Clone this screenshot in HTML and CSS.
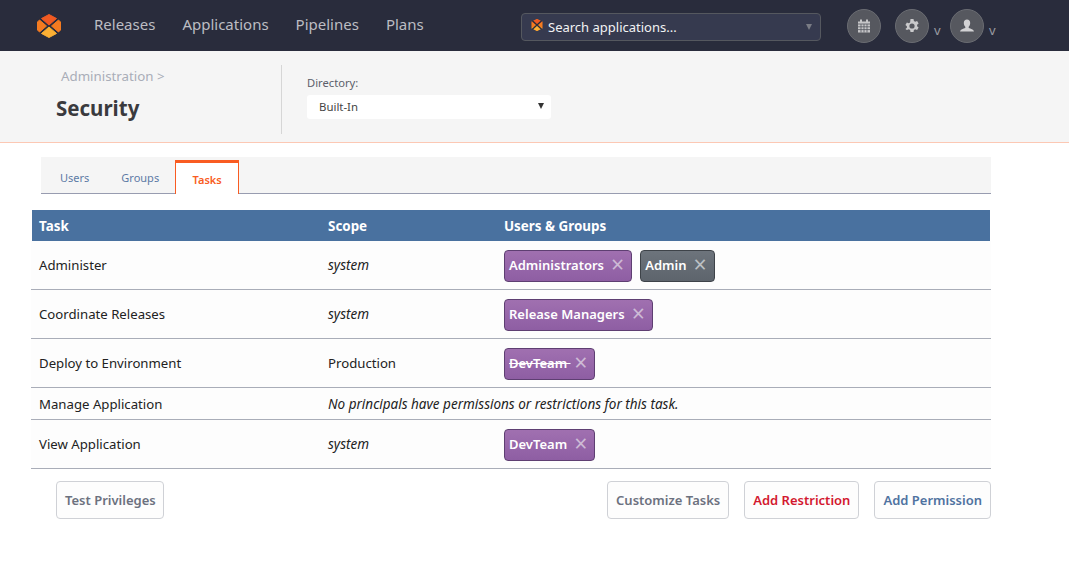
FILE: index.html
```html
<!DOCTYPE html>
<html lang="en">
<head>
<meta charset="utf-8">
<title>Security</title>
<link rel="stylesheet" href="styles.css">
</head>
<body>
<header class="nav">
  <svg class="logo" viewBox="0 0 26 26" width="26" height="26" aria-hidden="true">
    <path d="M13 1.500 L20.500 5.500 L13 12 L5.500 5.500Z" fill="#f05a22" stroke="#f05a22" stroke-linejoin="round"/>
    <path d="M22.500 7 L24.500 9 V17 L22.500 19 L15.500 13Z" fill="#f47b20" stroke="#f47b20" stroke-linejoin="round"/>
    <path d="M3.500 7 L1.500 9 V17 L3.500 19 L10.500 13Z" fill="#f47b20" stroke="#f47b20" stroke-linejoin="round"/>
    <path d="M13 14 L20.500 20.500 L13 24.500 L5.500 20.500Z" fill="#fbb034" stroke="#fbb034" stroke-linejoin="round"/>
  </svg>
  <nav class="nav-links">
    <a>Releases</a><a>Applications</a><a>Pipelines</a><a>Plans</a>
  </nav>
  <div class="search">
    <svg class="search-icon" viewBox="0 0 26 26" width="12" height="12" aria-hidden="true">
      <path d="M13 0 L25 6 V20 L13 26 L1 20 V6Z" fill="#f47b20"/>
      <path d="M13 0 L25 6 L13 13 L1 6Z" fill="#f05a22"/>
      <path d="M13 13 L25 20 L13 26 L1 20Z" fill="#fbb034"/>
      <path d="M3 4 L23 22 M23 4 L3 22" stroke="#292c3c" stroke-width="3"/>
    </svg>
    <span class="search-text">Search applications...</span>
    <span class="search-caret"></span>
  </div>
  <div class="round cal">
    <svg viewBox="0 0 14 14" width="14" height="14" aria-hidden="true">
      <path d="M1 2.500 H13 V13.500 H1Z" fill="#c6c6c8"/>
      <rect x="3" y=".5" width="2" height="3" fill="#c6c6c8"/>
      <rect x="9" y=".5" width="2" height="3" fill="#c6c6c8"/>
      <path d="M1 5 H13 M1 7.800 H13 M1 10.600 H13 M4 5 V13.500 M7 5 V13.500 M10 5 V13.500" stroke="#56585f" stroke-width=".8"/>
    </svg>
  </div>
  <div class="round gear">
    <svg viewBox="0 0 16 16" width="16" height="16" aria-hidden="true">
      <path fill="#c9c9cb" fill-rule="evenodd" d="M6.500 1h3l.4 2 1.300.7 1.900-.8 1.500 2.600-1.500 1.300v1.400l1.500 1.300-1.500 2.600-1.900-.8-1.300.7-.4 2h-3l-.4-2-1.300-.7-1.900.8L1.400 11l1.500-1.300V8.300L1.400 7 2.900 4.400l1.900.8L6.100 4.500ZM8 5.400a2.600 2.600 0 1 0 0 5.200 2.600 2.600 0 0 0 0-5.200Z"/>
    </svg>
  </div>
  <span class="chev">v</span>
  <div class="round user">
    <svg viewBox="0 0 16 16" width="16" height="16" aria-hidden="true">
      <path fill="#d2d2d4" d="M8 1.500c2 0 3.200 1.500 3.200 3.500 0 1.500-.7 3-1.500 3.700v1.300c2 .7 4.800 1.300 5.300 3.500H1c.5-2.200 3.300-2.800 5.300-3.500V8.700C5.500 8 4.800 6.500 4.800 5c0-2 1.200-3.500 3.200-3.500Z"/>
    </svg>
  </div>
  <span class="chev">v</span>
</header>

<section class="subhead">
  <div class="title-block">
    <div class="crumb">Administration &gt;</div>
    <h1>Security</h1>
  </div>
  <div class="directory">
    <label class="dir-label">Directory:</label>
    <div class="select"><span>Built-In</span><i class="select-caret"></i></div>
  </div>
</section>

<main class="content">
  <div class="tabs">
    <a class="tab">Users</a>
    <a class="tab">Groups</a>
    <a class="tab active">Tasks</a>
  </div>

  <table class="grid">
    <colgroup><col class="c1"><col class="c2"><col></colgroup>
    <thead>
      <tr><th>Task</th><th>Scope</th><th>Users &amp; Groups</th></tr>
    </thead>
    <tbody>
      <tr>
        <td>Administer</td><td><em>system</em></td>
        <td><span class="chip">Administrators<b class="x">×</b></span><span class="chip dark">Admin<b class="x">×</b></span></td>
      </tr>
      <tr>
        <td>Coordinate Releases</td><td><em>system</em></td>
        <td><span class="chip">Release Managers<b class="x">×</b></span></td>
      </tr>
      <tr>
        <td>Deploy to Environment</td><td>Production</td>
        <td><span class="chip"><s class="struck">DevTeam&nbsp;</s><b class="x">×</b></span></td>
      </tr>
      <tr class="thin">
        <td>Manage Application</td>
        <td colspan="2"><em>No principals have permissions or restrictions for this task.</em></td>
      </tr>
      <tr>
        <td>View Application</td><td><em>system</em></td>
        <td><span class="chip">DevTeam<b class="x">×</b></span></td>
      </tr>
    </tbody>
  </table>

  <div class="actions">
    <button class="btn grey test">Test Privileges</button>
    <span class="spacer"></span>
    <button class="btn grey">Customize Tasks</button>
    <button class="btn red">Add Restriction</button>
    <button class="btn blue">Add Permission</button>
  </div>
</main>
</body>
</html>
```

FILE: styles.css
```css
* { box-sizing: border-box; }
html, body { margin: 0; padding: 0; }
body {
  background: #fff;
  font-family: "Noto Sans", "Open Sans", sans-serif;
  font-size: 13px;
  color: #222;
  height: 561px;
  overflow: hidden;
}

.nav {
  height: 51px;
  background: #292c3c;
  display: flex;
  align-items: center;
  padding-left: 36px;
}
.logo { flex: none; margin-top: 1px; }
.nav-links {
  display: flex;
  margin-left: 32px;
  width: 427px;
  gap: 27px;
  color: #bcbdc3;
  font-size: 15px;
  margin-top: -4px;
}
.search {
  width: 300px;
  height: 28px;
  margin-top: 3px;
  background: #363a4f;
  border: 1px solid #55585f;
  border-radius: 4px;
  display: flex;
  align-items: center;
  padding: 0 8px 0 9px;
  color: #f2f2f4;
  font-size: 13px;
}
.search-icon { margin: -5px 5px 0 0; flex: none; }
.search-text { flex: 1; }
.search-caret {
  width: 0; height: 0;
  border-left: 3.500px solid transparent;
  border-right: 3.500px solid transparent;
  border-top: 6px solid #7a7c85;
}
.round {
  flex: none;
  width: 34px;
  height: 34px;
  border-radius: 50%;
  background: #56585f;
  border: 1px solid #6a6c72;
  display: flex;
  align-items: center;
  justify-content: center;
}
.cal { margin-left: 26px; margin-right: 14px; }
.chev {
  width: 21px;
  padding-left: 5px;
  padding-top: 8px;
  color: #9a9ba1;
  font-size: 13px;
}

.subhead {
  height: 92px;
  background: #f5f5f5;
  border-bottom: 1px solid #fcc8b4;
  display: flex;
  padding-top: 14px;
  padding-bottom: 8px;
}
.title-block {
  width: 282px;
  padding-left: 56px;
  border-right: 1px solid #d6d6d6;
}
.crumb {
  color: #a9adb8;
  font-size: 13.300px;
  line-height: 20px;
  margin-left: 5px;
  padding-top: 1px;
}
h1 {
  margin: 9px 0 0;
  color: #3a3a3e;
  font-size: 20.500px;
  line-height: 26px;
  font-weight: 700;
}
.directory { padding-left: 25px; padding-top: 10px; }
.dir-label {
  display: block;
  color: #5c5f6b;
  font-size: 11.200px;
  line-height: 16px;
}
.select {
  width: 244px;
  height: 24px;
  margin-top: 4px;
  background: #fff;
  border-radius: 3px;
  display: flex;
  align-items: center;
  justify-content: space-between;
  padding: 0 7px 2px 12px;
  font-size: 11.400px;
  color: #444;
}
.select-caret {
  width: 0; height: 0;
  margin-top: -1px;
  border-left: 3px solid transparent;
  border-right: 3px solid transparent;
  border-top: 6px solid #333;
}

.content { width: 960px; margin-left: 31px; padding-top: 14px; }
.tabs {
  margin-left: 10px;
  height: 37px;
  background: #f5f5f5;
  border-bottom: 1px solid #989cb0;
  display: flex;
  align-items: flex-end;
  padding-left: 19px;
}
.tab {
  color: #5d7aa5;
  font-size: 11px;
  line-height: 16px;
  margin-right: 32px;
  padding-bottom: 7px;
}
.tab.active {
  width: 64px;
  height: 34px;
  margin: 0 0 -1px -16px;
  background: #fff;
  border: 1px solid #f95c22;
  border-top-width: 3px;
  border-bottom: 0;
  color: #f95c22;
  font-weight: 600;
  text-align: center;
  padding: 9px 0 0;
}

.grid {
  width: 960px;
  margin-top: 16px;
  border-collapse: separate;
  border-spacing: 0;
  table-layout: fixed;
  background: #fdfdfd;
}
.c1 { width: 289px; }
.c2 { width: 176px; }
th {
  height: 31px;
  padding: 0 8px;
  background: #49719f;
  color: #fff;
  text-align: left;
  font-size: 13.400px;
  font-weight: 700;
}
th:first-child { border-left: 1px solid #fff; padding-left: 7px; }
th:last-child { border-right: 1px solid #fff; }
td {
  height: 49px;
  padding: 0 8px;
  border-bottom: 1px solid #a9adb8;
  color: #222;
  font-size: 13.200px;
}
.thin td { height: 32px; }
em { font-style: italic; font-size: 13.500px; }

.chip {
  display: inline-block;
  height: 32px;
  line-height: 28px;
  margin: 2px 8px 0 0;
  padding: 0 7px 0 4px;
  vertical-align: middle;
  border: 1px solid #5e3f72;
  border-radius: 4px;
  background: linear-gradient(#a070b0, #8e5ea3);
  color: #fff;
  font-size: 13px;
  font-weight: 600;
}
.chip.dark {
  background: linear-gradient(#6d747c, #5d646c);
  border-color: #3e4349;
}
.x {
  margin-left: 7px;
  font-size: 23px;
  font-weight: 400;
  color: #cdbad5;
  vertical-align: -3px;
  line-height: 20px;
}
.dark .x { color: #bcc0c4; }
.struck { text-decoration-thickness: 1px; margin-right: -3.400px; }

.actions {
  display: flex;
  gap: 15px;
  margin-top: 12px;
  padding-left: 25px;
}
.spacer { flex: 1; }
.btn {
  height: 38px;
  padding: 0 8px;
  background: #fdfdfd;
  border: 1px solid #cfd1d6;
  border-radius: 4px;
  font-family: inherit;
  font-size: 13px;
  font-weight: 600;
}
.test { padding-right: 7px; }
.grey { color: #6c717f; }
.red { color: #d3182f; }
.blue { color: #4f72a0; }
```
